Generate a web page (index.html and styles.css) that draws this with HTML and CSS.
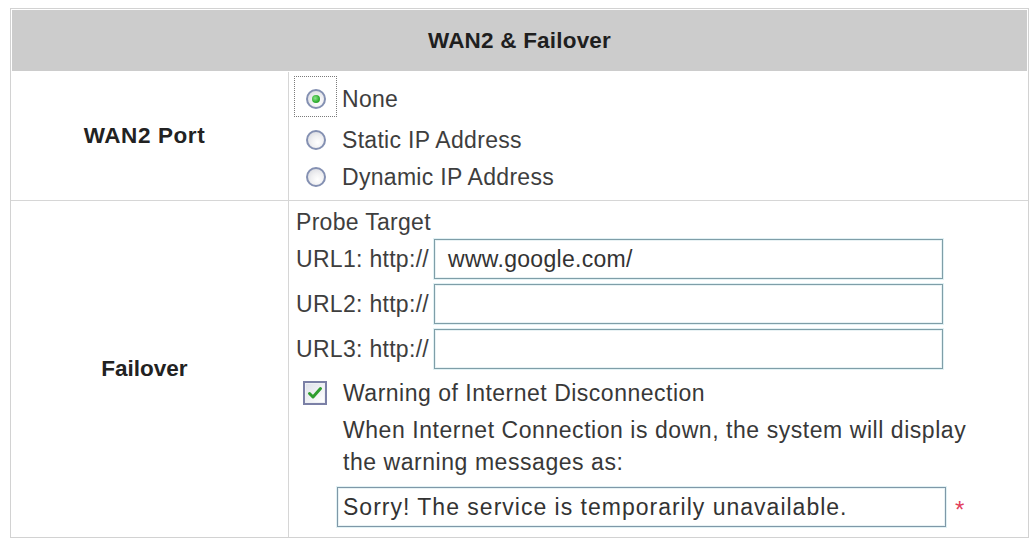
FILE: index.html
```html
<!DOCTYPE html>
<html>
<head>
<meta charset="utf-8">
<title>WAN2 &amp; Failover</title>
<link rel="stylesheet" href="styles.css">
</head>
<body>
<div class="panel">
  <div class="head">WAN2 &amp; Failover</div>
  <div class="row row-wan">
    <div class="label">WAN2 Port</div>
    <div class="field options">
      <div class="opt opt1">
        <span class="radio-box focus"><span class="radio checked"></span></span>
        <span class="opt-text">None</span>
      </div>
      <div class="opt opt2">
        <span class="radio-box"><span class="radio"></span></span>
        <span class="opt-text">Static IP Address</span>
      </div>
      <div class="opt opt3">
        <span class="radio-box"><span class="radio"></span></span>
        <span class="opt-text">Dynamic IP Address</span>
      </div>
    </div>
  </div>
  <div class="row row-fail">
    <div class="label">Failover</div>
    <div class="field fail">
      <div class="probe">Probe Target</div>
      <div class="url-row"><span class="url-label">URL1: http://</span><div class="input url">www.google.com/</div></div>
      <div class="url-row"><span class="url-label">URL2: http://</span><div class="input url"></div></div>
      <div class="url-row"><span class="url-label">URL3: http://</span><div class="input url"></div></div>
      <div class="check-row">
        <span class="checkbox">
          <svg width="24" height="24" viewBox="0 0 24 24">
            <defs>
              <linearGradient id="cbg" x1="0" y1="0" x2="1" y2="1">
                <stop offset="0" stop-color="#dfe2ea"/>
                <stop offset="1" stop-color="#ffffff"/>
              </linearGradient>
            </defs>
            <rect x="1" y="1" width="22" height="22" fill="#eef0f4" stroke="#7b80a6" stroke-width="2"/>
            <rect x="3" y="3" width="18" height="18" fill="url(#cbg)"/>
            <path d="M6.5 12.5 L10 16 L17.5 7.5" fill="none" stroke="#2f9e2f" stroke-width="3" stroke-linecap="round" stroke-linejoin="round"/>
          </svg>
        </span>
        <span class="check-text">Warning of Internet Disconnection</span>
      </div>
      <div class="note">When Internet Connection is down, the system will display<br>the warning messages as:</div>
      <div class="msg-row">
        <div class="input msg">Sorry! The service is temporarily unavailable.</div>
        <span class="req">*</span>
      </div>
    </div>
  </div>
</div>
</body>
</html>
```
FILE: styles.css
```css
html, body {
  margin: 0;
  padding: 0;
  background: #ffffff;
}

body {
  font-family: "Liberation Sans", Arial, sans-serif;
  color: #3e3e3e;
}

.panel {
  margin: 8px 0 0 10px;
  width: 1019px;
  box-sizing: border-box;
  border: 1px solid #d2d2d2;
  background: #ffffff;
}

.head {
  margin: 1px 1px 0 1px;
  height: 61px;
  background: #cccccc;
  display: flex;
  align-items: center;
  justify-content: center;
  font-weight: bold;
  font-size: 22.5px;
  letter-spacing: 0.2px;
  color: #1f1f1f;
}

.row {
  display: flex;
}

.row-wan {
  margin-top: 1px;
}

.row-fail {
  border-top: 1px solid #d6d6d6;
}

.label {
  width: 278px;
  box-sizing: border-box;
  border-right: 1px solid #d6d6d6;
  display: flex;
  align-items: center;
  justify-content: center;
  padding-right: 10px;
  font-weight: bold;
  font-size: 22.5px;
  color: #222222;
}

.row-wan .label {
  letter-spacing: 0.6px;
}

.field {
  flex: 1;
}

.options {
  padding: 4px 0 0 5px;
  height: 128px;
  box-sizing: border-box;
  display: flex;
  flex-direction: column;
}

.opt {
  display: flex;
  align-items: center;
  font-size: 23px;
  letter-spacing: 0.3px;
}

.opt1 { height: 42px; }
.opt2 { height: 44px; }
.opt3 { height: 30px; }

.radio-box {
  width: 43px;
  height: 100%;
  box-sizing: border-box;
  display: flex;
  align-items: center;
  justify-content: center;
  margin-right: 5px;
}

.radio-box.focus {
  height: 41px;
  border: 1px dotted #7a7a7a;
  padding-top: 4px;
  align-self: flex-start;
}

.opt1 .opt-text {
  padding-top: 4px;
}

.radio {
  width: 20px;
  height: 20px;
  box-sizing: border-box;
  border-radius: 50%;
  border: 2px solid #8490b2;
  background: radial-gradient(circle at 60% 65%, #ffffff 0%, #f0f0f2 45%, #d2d4dc 100%);
  display: flex;
  align-items: center;
  justify-content: center;
}

.radio.checked::after {
  content: "";
  width: 8px;
  height: 8px;
  border-radius: 50%;
  background: radial-gradient(circle at 40% 40%, #8ee58e 0%, #35b235 55%, #1f8a1f 100%);
}

.fail {
  padding: 5px 0 10px 7px;
  font-size: 23px;
  letter-spacing: 0.3px;
}

.probe {
  height: 33px;
  line-height: 33px;
}

.url-row {
  display: flex;
  height: 45px;
}

.url-label {
  width: 138px;
  line-height: 40px;
  white-space: nowrap;
}

.input {
  height: 40px;
  box-sizing: border-box;
  border: 1px solid #7f9ea8;
  box-shadow: 0 0 0 1px #e1f1f4, inset 0 0 0 1px #e8f2f4;
  background: #ffffff;
  color: #333333;
  line-height: 38px;
  white-space: nowrap;
  overflow: hidden;
}

.url {
  width: 509px;
  padding-left: 13px;
}

.check-row {
  display: flex;
  align-items: center;
  height: 38px;
  padding-left: 7px;
  letter-spacing: 0.5px;
  color: #383838;
}

.checkbox {
  width: 24px;
  height: 24px;
  margin-right: 16px;
  display: flex;
}

.note {
  margin-top: 2px;
  padding-left: 47px;
  line-height: 32px;
  letter-spacing: 0.55px;
  color: #383838;
}

.msg-row {
  display: flex;
  align-items: center;
  margin-top: 9px;
  padding-left: 41px;
}

.msg {
  width: 609px;
  padding-left: 5px;
  letter-spacing: 1px;
  border-color: #7f98a8;
}

.req {
  margin-left: 9px;
  color: #e2405c;
  font-size: 24px;
  line-height: 20px;
  padding-top: 6px;
}
```
